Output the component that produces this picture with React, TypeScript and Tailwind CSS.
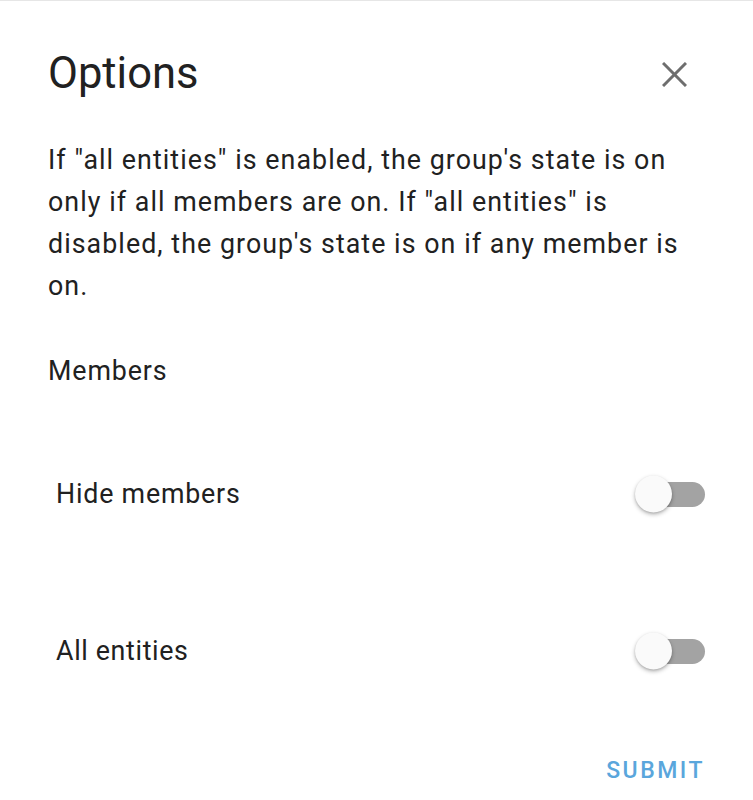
import { useState } from 'react';

function Toggle({ checked, onChange }: { checked: boolean; onChange: (v: boolean) => void }) {
  return (
    <button
      type="button"
      onClick={() => onChange(!checked)}
      className="relative w-[63px] h-[25px] rounded-full bg-[#a3a3a3] shrink-0"
    >
      <span
        className={`absolute top-1/2 -translate-y-1/2 w-[37px] h-[37px] rounded-full bg-[#fafafa] shadow-[0_2px_4px_rgba(0,0,0,0.28),0_1px_2px_rgba(0,0,0,0.12)] ${
          checked ? 'left-[33px]' : 'left-[-7px]'
        }`}
      />
    </button>
  );
}

export default function App() {
  const [hideMembers, setHideMembers] = useState(false);
  const [allEntities, setAllEntities] = useState(false);

  return (
    <div className="w-[753px] h-[800px] bg-white border-t border-[#e6e6e6] font-['Roboto',sans-serif] text-[#212121] overflow-hidden">
      {/* Header */}
      <div className="flex items-center justify-between pl-[48px] pr-[66px] pt-[52px]">
        <h2 className="text-[43.5px] leading-[42px] font-normal">Options</h2>
        <button type="button" className="w-[25px] h-[25px] text-[#6e6e6e]">
          <svg width="25" height="25" viewBox="0 0 25 25" fill="none" stroke="currentColor" strokeWidth={3}>
            <line x1="1" y1="1" x2="24" y2="24" />
            <line x1="24" y1="1" x2="1" y2="24" />
          </svg>
        </button>
      </div>

      <div className="px-[48px]">
        <p className="mt-[44px] text-[26.8px] leading-[42px] tracking-[1.05px]">
          If "all entities" is enabled, the group's state is on only if all members are on. If "all entities" is
          disabled, the group's state is on if any member is on.
        </p>

        <p className="mt-[43px] text-[26.8px] leading-[42px] tracking-[0.9px]">Members</p>

        <div className="mt-[74px] h-[56px] flex items-center justify-between pl-[8px] pr-[-1px]">
          <span className="text-[26.8px] tracking-[0.8px]">Hide members</span>
          <Toggle checked={hideMembers} onChange={setHideMembers} />
        </div>

        <div className="mt-[101px] h-[56px] flex items-center justify-between pl-[8px]">
          <span className="text-[26.8px] tracking-[0.65px]">All entities</span>
          <Toggle checked={allEntities} onChange={setAllEntities} />
        </div>
      </div>

      <div className="flex justify-end pr-[48px] mt-[79px]">
        <button type="button" className="text-[23px] leading-[26px] font-medium tracking-[2.5px] text-[#5aa6dc]">
          SUBMIT
        </button>
      </div>
    </div>
  );
}
